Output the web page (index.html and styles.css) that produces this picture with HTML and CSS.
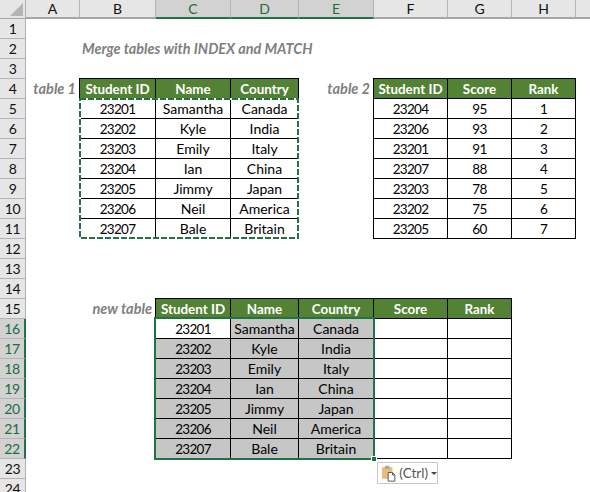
FILE: index.html
```html
<!DOCTYPE html>
<html lang="en">
<head>
<meta charset="utf-8">
<title>Merge tables with INDEX and MATCH</title>
<link rel="stylesheet" href="styles.css">
</head>
<body>
<div class="sheet">
  <div class="corner"><svg class="corner-mark" width="15" height="15" viewBox="0 0 15 15"><path d="M14 1V14H1Z" fill="#b4b4b4"/></svg></div>
  <div class="cols">
    <div class="col w-a">A</div>
    <div class="col w-b">B</div>
    <div class="col w-c on">C</div>
    <div class="col w-d on">D</div>
    <div class="col w-e on">E</div>
    <div class="col w-f">F</div>
    <div class="col w-g">G</div>
    <div class="col w-h">H</div>
    <div class="col w-i"></div>
  </div>
  <div class="rows">
    <div class="row">1</div><div class="row">2</div><div class="row">3</div><div class="row">4</div>
    <div class="row">5</div><div class="row">6</div><div class="row">7</div><div class="row">8</div>
    <div class="row">9</div><div class="row">10</div><div class="row">11</div><div class="row">12</div>
    <div class="row">13</div><div class="row">14</div><div class="row">15</div>
    <div class="row on">16</div><div class="row on">17</div><div class="row on">18</div><div class="row on">19</div>
    <div class="row on">20</div><div class="row on">21</div><div class="row on">22</div>
    <div class="row">23</div><div class="row">24</div>
  </div>
  <div class="cells">
    <div class="title">Merge tables with INDEX and MATCH</div>
    <div class="label label-1">table 1</div>
    <div class="label label-2">table 2</div>
    <div class="label label-3">new table</div>

    <div class="tbl tbl-1">
      <div class="h">Student ID</div><div class="h">Name</div><div class="h">Country</div>
      <div class="n">23201</div><div>Samantha</div><div>Canada</div>
      <div class="n">23202</div><div>Kyle</div><div>India</div>
      <div class="n">23203</div><div>Emily</div><div>Italy</div>
      <div class="n">23204</div><div>Ian</div><div>China</div>
      <div class="n">23205</div><div>Jimmy</div><div>Japan</div>
      <div class="n">23206</div><div>Neil</div><div>America</div>
      <div class="n">23207</div><div>Bale</div><div>Britain</div>
      <svg class="ants" width="222" height="144" viewBox="0 0 222 144">
        <rect x="1" y="1" width="218" height="139" fill="none" stroke="#fff" stroke-width="2"/>
        <rect x="1" y="1" width="218" height="139" fill="none" stroke="#217346" stroke-width="2" stroke-dasharray="6 2"/>
      </svg>
    </div>

    <div class="tbl tbl-2">
      <div class="h">Student ID</div><div class="h">Score</div><div class="h">Rank</div>
      <div class="n">23204</div><div class="n">95</div><div class="n">1</div>
      <div class="n">23206</div><div class="n">93</div><div class="n">2</div>
      <div class="n">23201</div><div class="n">91</div><div class="n">3</div>
      <div class="n">23207</div><div class="n">88</div><div class="n">4</div>
      <div class="n">23203</div><div class="n">78</div><div class="n">5</div>
      <div class="n">23202</div><div class="n">75</div><div class="n">6</div>
      <div class="n">23205</div><div class="n">60</div><div class="n">7</div>
    </div>

    <div class="tbl tbl-3">
      <div class="h">Student ID</div><div class="h">Name</div><div class="h">Country</div><div class="h">Score</div><div class="h">Rank</div>
      <div class="n">23201</div><div class="g">Samantha</div><div class="g">Canada</div><div></div><div></div>
      <div class="g n">23202</div><div class="g">Kyle</div><div class="g">India</div><div></div><div></div>
      <div class="g n">23203</div><div class="g">Emily</div><div class="g">Italy</div><div></div><div></div>
      <div class="g n">23204</div><div class="g">Ian</div><div class="g">China</div><div></div><div></div>
      <div class="g n">23205</div><div class="g">Jimmy</div><div class="g">Japan</div><div></div><div></div>
      <div class="g n">23206</div><div class="g">Neil</div><div class="g">America</div><div></div><div></div>
      <div class="g n">23207</div><div class="g">Bale</div><div class="g">Britain</div><div></div><div></div>
      <span class="selection"></span>
      <span class="handle"></span>
      <div class="paste">
        <svg width="16" height="18" viewBox="0 0 16 18">
          <path d="M1 3H12V15H1Z" fill="#e8bd7c"/>
          <path d="M4 1.5H9V4.5H4Z" fill="#a8a8a8"/>
          <path d="M7.5 8.5H12L14.5 11V17.5H7.5Z" fill="#fff" stroke="#555"/>
          <path d="M12 8.5V11H14.5" fill="none" stroke="#555"/>
        </svg>
        <span class="paste-text">(Ctrl)</span>
        <span class="caret"></span>
      </div>
    </div>
  </div>
</div>
</body>
</html>
```
FILE: styles.css
```css
html, body {
  margin: 0;
  padding: 0;
  background: #fff;
}
.sheet {
  width: 590px;
  height: 492px;
  overflow: hidden;
  display: grid;
  grid-template-columns: 26px 564px;
  grid-template-rows: 19px 473px;
  font-family: Lato, "Liberation Sans", sans-serif;
  font-size: 14px;
  color: #000;
}
.corner {
  background: #e6e6e6;
  border-right: 1px solid #b0b0b0;
  border-bottom: 1px solid #a6a6a6;
  box-sizing: border-box;
  display: flex;
  align-items: flex-end;
  justify-content: flex-end;
  padding: 0 1px 1px 0;
}
.cols {
  display: flex;
  background: #e6e6e6;
}
.col {
  box-sizing: border-box;
  height: 19px;
  line-height: 17px;
  text-align: center;
  border-right: 1px solid #b4b4b4;
  border-bottom: 2px solid #a6a6a6;
  color: #111;
}
.col.on {
  background: #d2d2d2;
  border-bottom-color: #217346;
  color: #1d6b42;
}
.w-a { width: 54px; }
.w-b { width: 76px; }
.w-c { width: 75px; }
.w-d { width: 68px; }
.w-e { width: 75px; }
.w-f { width: 74px; }
.w-g { width: 64px; }
.w-h { width: 64px; }
.w-i { width: 14px; border-right: 0; }
.rows {
  display: flex;
  flex-direction: column;
}
.row {
  box-sizing: border-box;
  height: 20px;
  flex: none;
  line-height: 19px;
  text-align: center;
  letter-spacing: -0.4px;
  background: #e6e6e6;
  border-right: 1px solid #b0b0b0;
  border-bottom: 1px solid #b4b4b4;
  color: #111;
}
.row.on {
  background: #d2d2d2;
  border-right: 2px solid #217346;
  color: #1d6b42;
}
.cells {
  display: grid;
  grid-template-columns: 53px 76px 75px 68px 75px 74px 64px 64px 15px;
  grid-template-rows: repeat(24, 20px);
}
.title {
  grid-column: 2 / 6;
  grid-row: 2;
  padding-left: 3px;
  line-height: 20px;
  font-size: 14.4px;
  font-weight: 700;
  font-style: italic;
  color: #808080;
  white-space: nowrap;
}
.label {
  line-height: 20px;
  font-size: 14.5px;
  text-align: right;
  font-weight: 700;
  font-style: italic;
  color: #808080;
  padding-right: 3px;
  white-space: nowrap;
}
.label-1 { grid-column: 1; grid-row: 4; }
.label-2 { grid-column: 5; grid-row: 4; }
.label-3 { grid-column: 1 / 3; grid-row: 15; }
.tbl {
  position: relative;
  align-self: start;
  justify-self: start;
  display: grid;
  gap: 1px;
  padding: 1px;
  margin-top: -1px;
  background: #000;
  grid-auto-rows: 19px;
}
.tbl > div {
  background: #fff;
  text-align: center;
  line-height: 19px;
  white-space: nowrap;
}
.tbl > .n {
  font-size: 13.5px;
  line-height: 21px;
  letter-spacing: -0.7px;
}
.tbl > .h {
  background: #548235;
  color: #fff;
  font-size: 13.4px;
  line-height: 21px;
  font-weight: 700;
}
.tbl > .g { background: #c6c6c6; }
.tbl-1 {
  grid-column: 2 / 5;
  grid-row: 4 / 12;
  grid-template-columns: 75px 74px 67px;
}
.tbl-2 {
  grid-column: 6 / 9;
  grid-row: 4 / 12;
  grid-template-columns: 73px 63px 63px;
}
.tbl-3 {
  grid-column: 3 / 8;
  grid-row: 15 / 23;
  grid-template-columns: 74px 67px 74px 73px 63px;
}
.ants {
  position: absolute;
  left: 0;
  top: 20px;
}
.selection {
  position: absolute;
  left: -1px;
  top: 19px;
  width: 217px;
  height: 139px;
  border: 2px solid #217346;
}
.handle {
  position: absolute;
  left: 216px;
  top: 158px;
  width: 4px;
  height: 4px;
  background: #217346;
  border: 1px solid #fff;
}
.tbl > .paste {
  position: absolute;
  left: 222px;
  top: 164px;
  width: 56px;
  height: 20px;
  display: flex;
  align-items: center;
  gap: 3px;
  padding-left: 3px;
  box-sizing: content-box;
  border: 1px solid #c8c8c8;
  background: #fff;
  color: #555;
  font-size: 13.5px;
  line-height: 20px;
}
.paste-text { color: #555; }
.caret {
  width: 0;
  height: 0;
  border-left: 3px solid transparent;
  border-right: 3px solid transparent;
  border-top: 3px solid #444;
}
```
